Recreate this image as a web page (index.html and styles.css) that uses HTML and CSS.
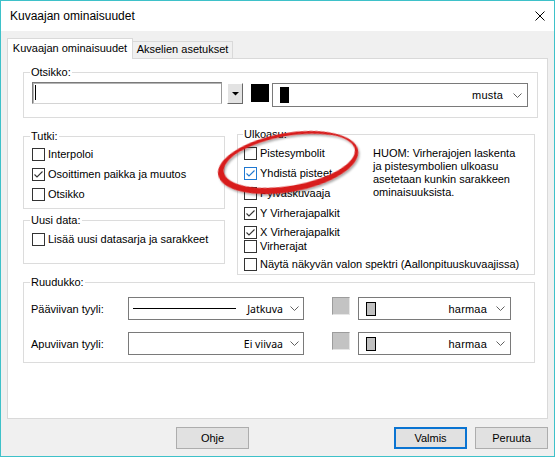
FILE: index.html
```html
<!DOCTYPE html>
<html lang="fi">
<head>
<meta charset="utf-8">
<title>Kuvaajan ominaisuudet</title>
<link rel="stylesheet" href="styles.css">
</head>
<body>
<div class="window">
  <div class="titlebar">
    <span class="title">Kuvaajan ominaisuudet</span>
    <svg class="close" width="10" height="10" viewBox="0 0 10 10"><path d="M0.5 0.5L9.5 9.5M9.5 0.5L0.5 9.5" stroke="#000" stroke-width="1" fill="none"/></svg>
  </div>
  <div class="content">
    <div class="tabs">
      <div class="tab tab-active">Kuvaajan ominaisuudet</div>
      <div class="tab tab-inactive">Akselien asetukset</div>
    </div>
    <div class="panel">
      <div class="group g-otsikko">
        <span class="legend">Otsikko:</span>
        <div class="otsikko-row">
          <div class="textbox"><span class="caret"></span></div>
          <div class="dropbtn"><svg width="7" height="4" viewBox="0 0 7 4"><polygon points="0,0 7,0 3.5,3.5" fill="#000"/></svg></div>
          <div class="swatch-black"></div>
          <div class="combo c-musta">
            <span class="chip chip-black"></span>
            <span class="ctext ctext-ms">musta</span>
            <svg class="chev" width="9" height="5" viewBox="0 0 9 5"><polyline points="0.5,0.5 4.5,4.5 8.5,0.5" fill="none" stroke="#606060" stroke-width="1"/></svg>
          </div>
        </div>
      </div>

      <div class="middle">
        <div class="leftcol">
          <div class="group g-tutki">
            <span class="legend">Tutki:</span>
            <div class="cb-list">
              <div class="cb-row"><span class="cb"></span>Interpoloi</div>
              <div class="cb-row"><span class="cb"><svg width="11" height="11" viewBox="0 0 11 11"><path d="M1.5 5.5L4 8L9.5 2.5" fill="none" stroke="#333" stroke-width="1.1"/></svg></span>Osoittimen paikka ja muutos</div>
              <div class="cb-row"><span class="cb"></span>Otsikko</div>
            </div>
          </div>
          <div class="group g-uusi">
            <span class="legend">Uusi data:</span>
            <div class="cb-row"><span class="cb"></span>Lisää uusi datasarja ja sarakkeet</div>
          </div>
        </div>

        <div class="group g-ulkoasu">
          <span class="legend legend-ulk">Ulkoasu:</span>
          <div class="ulk-body">
            <div class="cb-list ulk-list">
              <div class="cb-row"><span class="cb"></span>Pistesymbolit</div>
              <div class="cb-row"><span class="cb cb-hot"><svg width="11" height="11" viewBox="0 0 11 11"><path d="M1.5 5.5L4 8L9.5 2.5" fill="none" stroke="#1f78d1" stroke-width="1.1"/></svg></span>Yhdistä pisteet</div>
              <div class="cb-row"><span class="cb"></span>Pylväskuvaaja</div>
              <div class="cb-row"><span class="cb"><svg width="11" height="11" viewBox="0 0 11 11"><path d="M1.5 5.5L4 8L9.5 2.5" fill="none" stroke="#333" stroke-width="1.1"/></svg></span>Y Virherajapalkit</div>
              <div class="cb-row row-x"><span class="cb"><svg width="11" height="11" viewBox="0 0 11 11"><path d="M1.5 5.5L4 8L9.5 2.5" fill="none" stroke="#333" stroke-width="1.1"/></svg></span>X Virherajapalkit</div>
              <div class="cb-row row-tight"><span class="cb"></span>Virherajat</div>
              <div class="cb-row row-near"><span class="cb"></span>Näytä näkyvän valon spektri (Aallonpituuskuvaajissa)</div>
            </div>
            <div class="note">HUOM: Virherajojen laskenta<br>ja pistesymbolien ulkoasu<br>asetetaan kunkin sarakkeen<br>ominaisuuksista.</div>
          </div>
        </div>
      </div>

      <div class="group g-ruudukko">
        <span class="legend">Ruudukko:</span>
        <div class="grid-rows">
          <div class="grid-row">
            <span class="row-label">Pääviivan tyyli:</span>
            <div class="combo c-line">
              <span class="solid-line"></span>
              <span class="ctext">Jatkuva</span>
              <svg class="chev" width="9" height="5" viewBox="0 0 9 5"><polyline points="0.5,0.5 4.5,4.5 8.5,0.5" fill="none" stroke="#606060" stroke-width="1"/></svg>
            </div>
            <div class="swatch-gray"></div>
            <div class="combo c-color">
              <span class="chip chip-gray"></span>
              <span class="ctext ctext-ms">harmaa</span>
              <svg class="chev" width="9" height="5" viewBox="0 0 9 5"><polyline points="0.5,0.5 4.5,4.5 8.5,0.5" fill="none" stroke="#606060" stroke-width="1"/></svg>
            </div>
          </div>
          <div class="grid-row">
            <span class="row-label">Apuviivan tyyli:</span>
            <div class="combo c-line">
              <span class="ctext">Ei viivaa</span>
              <svg class="chev" width="9" height="5" viewBox="0 0 9 5"><polyline points="0.5,0.5 4.5,4.5 8.5,0.5" fill="none" stroke="#606060" stroke-width="1"/></svg>
            </div>
            <div class="swatch-gray"></div>
            <div class="combo c-color">
              <span class="chip chip-gray"></span>
              <span class="ctext ctext-ms">harmaa</span>
              <svg class="chev" width="9" height="5" viewBox="0 0 9 5"><polyline points="0.5,0.5 4.5,4.5 8.5,0.5" fill="none" stroke="#606060" stroke-width="1"/></svg>
            </div>
          </div>
        </div>
      </div>
    </div>

    <div class="buttons">
      <button class="btn btn-help">Ohje</button>
      <button class="btn btn-ok">Valmis</button>
      <button class="btn btn-cancel">Peruuta</button>
    </div>
  </div>

  <svg class="highlight" width="170" height="90" viewBox="0 0 170 90">
    <defs>
      <filter id="shadow" x="-10%" y="-20%" width="120%" height="150%">
        <feDropShadow dx="1" dy="2" stdDeviation="1.3" flood-color="#000" flood-opacity="0.35"/>
      </filter>
    </defs>
    <g transform="rotate(-10 88 44)" filter="url(#shadow)">
      <path fill="#d81c1c" fill-rule="evenodd" d="M17,44.5 a71,29.5 0 1,0 142,0 a71,29.5 0 1,0 -142,0 Z M23,43 a66.5,25 0 1,0 133,0 a66.5,25 0 1,0 -133,0 Z"/>
    </g>
  </svg>
</div>
</body>
</html>
```

FILE: styles.css
```css
* {
  box-sizing: border-box;
}

html, body {
  margin: 0;
  padding: 0;
  background: #fff;
}

body {
  font-family: "Liberation Sans", Arial, sans-serif;
  font-size: 11px;
  color: #000;
}

.window {
  position: relative;
  width: 555px;
  height: 457px;
  border: 1px solid #3ec1c9;
  background: #f0f0f0;
  overflow: hidden;
}

.titlebar {
  height: 30px;
  background: #fff;
  display: flex;
  align-items: center;
  justify-content: space-between;
  padding: 0 9px 0 9px;
}

.title {
  font-size: 12px;
}

.close {
  display: block;
}

.content {
  padding: 7px 6px 0 6px;
}

.tabs {
  display: flex;
  align-items: flex-end;
  height: 20px;
  position: relative;
  z-index: 1;
}

.tab {
  border: 1px solid #d9d9d9;
  border-bottom: none;
  text-align: center;
  white-space: nowrap;
}

.tab-active {
  width: 126px;
  height: 21px;
  margin-bottom: -1px;
  background: #fff;
  line-height: 18px;
}

.tab-inactive {
  width: 100px;
  height: 17px;
  border-left: none;
  background: #f0f0f0;
  line-height: 15px;
}

.panel {
  width: 541px;
  height: 361px;
  border: 1px solid #d9d9d9;
  background: #fff;
  padding: 13px 0 0 15px;
}

.group {
  position: relative;
  border: 1px solid #dcdcdc;
}

.legend {
  position: absolute;
  top: -8px;
  left: 6px;
  padding: 0 1px;
  background: #fff;
  line-height: 14px;
  white-space: nowrap;
}

.legend-ulk {
  left: 5px;
}

/* Otsikko */
.g-otsikko {
  width: 515px;
  height: 46px;
  padding: 9px 0 0 8px;
}

.otsikko-row {
  display: flex;
  align-items: flex-start;
}

.textbox {
  width: 190px;
  height: 22px;
  border: 1px solid;
  border-color: #7a7a7a #9a9a9a #d4d4d4 #7a7a7a;
  box-shadow: inset 1px 1px 0 #b4b4b4;
  background: #fff;
  padding: 2px 0 0 2px;
}

.caret {
  display: block;
  width: 1px;
  height: 15px;
  background: #000;
}

.dropbtn {
  width: 16px;
  height: 21px;
  margin: 1px 0 0 5px;
  background: #e3e3e3;
  border: 1px solid;
  border-color: #fff #696969 #696969 #fff;
  display: flex;
  align-items: center;
  justify-content: center;
}

.dropbtn svg {
  display: block;
}

.swatch-black {
  width: 18px;
  height: 18px;
  margin: 2px 0 0 8px;
  background: #000;
}

.combo {
  display: flex;
  align-items: center;
  border: 1px solid #7a7a7a;
  background: #fff;
  padding: 0 5px 0 7px;
  white-space: nowrap;
}

.c-musta {
  width: 256px;
  height: 24px;
  margin: 1px 0 0 3px;
}

.chip {
  flex: none;
  display: block;
}

.chip-black {
  width: 9px;
  height: 16px;
  background: #000;
}

.chip-gray {
  width: 10px;
  height: 14px;
  background: #c0c0c0;
  border: 1px solid #000;
}

.ctext {
  flex: 1;
  text-align: right;
  font-family: "Noto Sans", "Liberation Sans", sans-serif;
  font-size: 10.5px;
}

.ctext-ms {
  font-family: "Liberation Sans", Arial, sans-serif;
  font-size: 11px;
  letter-spacing: 0.2px;
}

.chev {
  flex: none;
  display: block;
  margin-left: 9px;
}

.c-musta .chev {
  margin-left: 10px;
}

/* middle */
.middle {
  display: flex;
  align-items: flex-start;
  gap: 12px;
  margin-top: 16px;
}

.leftcol {
  width: 202px;
  padding-top: 2px;
}

.g-tutki {
  height: 73px;
  padding: 11px 0 0 8px;
}

.g-uusi {
  height: 44px;
  margin-top: 11px;
  padding: 12px 0 0 8px;
}

.g-ulkoasu {
  width: 298px;
  height: 141px;
  padding: 12px 0 0 6px;
}

.cb-list {
  display: flex;
  flex-direction: column;
  gap: 7px;
}

.cb-row {
  display: flex;
  align-items: center;
  height: 13px;
  line-height: 13px;
  white-space: nowrap;
}

.cb {
  flex: none;
  width: 13px;
  height: 13px;
  border: 1px solid #333;
  background: #fff;
  margin-right: 3px;
}

.cb svg {
  display: block;
}

.cb-hot {
  border-color: #1f78d1;
}

.row-x {
  margin-top: -1px;
}

.row-tight {
  margin-top: -6px;
}

.row-near {
  margin-top: -2px;
}

.ulk-body {
  display: flex;
  align-items: flex-start;
}

.ulk-list {
  width: 129px;
}

.note {
  line-height: 13px;
  white-space: nowrap;
}

/* Ruudukko */
.g-ruudukko {
  width: 512px;
  height: 81px;
  margin-top: 7px;
  padding: 14px 0 0 7px;
}

.grid-rows {
  display: flex;
  flex-direction: column;
  gap: 12px;
}

.grid-row {
  display: flex;
  align-items: center;
  height: 23px;
}

.row-label {
  width: 97px;
  flex: none;
}

.c-line {
  width: 176px;
  height: 23px;
  padding: 0 4px 0 4px;
}

.c-line .chev {
  margin-left: 7px;
}

.solid-line {
  flex: none;
  display: block;
  width: 103px;
  height: 1px;
  background: #000;
}

.swatch-gray {
  flex: none;
  align-self: flex-start;
  width: 18px;
  height: 18px;
  margin-left: 28px;
  background: #c3c3c3;
  border: 1px solid;
  border-color: #9c9c9c #e6e6e6 #e6e6e6 #9c9c9c;
}

.c-color {
  width: 153px;
  height: 23px;
  margin-left: 8px;
}

/* Buttons */
.buttons {
  display: flex;
  margin-top: 8px;
}

.btn {
  width: 73px;
  height: 22px;
  border: 1px solid #adadad;
  background: #e1e1e1;
  font-family: "Liberation Sans", Arial, sans-serif;
  font-size: 11px;
  color: #000;
  padding: 0;
  line-height: 20px;
}

.btn-help {
  margin-left: 169px;
}

.btn-ok {
  margin-left: 145px;
  border: 2px solid #0a74d2;
  line-height: 18px;
}

.btn-cancel {
  margin-left: 8px;
}

.highlight {
  position: absolute;
  left: 199px;
  top: 117px;
  pointer-events: none;
}
```
